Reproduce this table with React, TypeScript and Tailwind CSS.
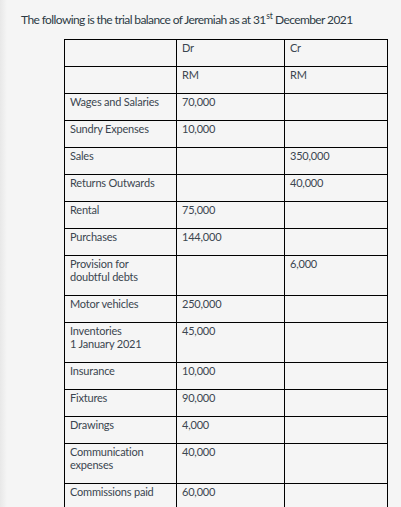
const rows: [string[], string, string][] = [
  [["Wages and Salaries"], "70,000", ""],
  [["Sundry Expenses"], "10,000", ""],
  [["Sales"], "", "350,000"],
  [["Returns Outwards"], "", "40,000"],
  [["Rental"], "75,000", ""],
  [["Purchases"], "144,000", ""],
  [["Provision for", "doubtful debts"], "", "6,000"],
  [["Motor vehicles"], "250,000", ""],
  [["Inventories", "1 January 2021"], "45,000", ""],
  [["Insurance"], "10,000", ""],
  [["Fixtures"], "90,000", ""],
  [["Drawings"], "4,000", ""],
  [["Communication", "expenses"], "40,000", ""],
  [["Commissions paid"], "60,000", ""],
];

function Cell({ lines }: { lines: string[] }) {
  return (
    <td className="border border-black px-[5px] pt-[1px] pb-[12px] align-top">
      {lines.map((l, i) => (
        <div key={i}>{l || "\u00a0"}</div>
      ))}
    </td>
  );
}

export default function App() {
  return (
    <div
      className="h-[507px] overflow-hidden bg-[#f5f5f5] text-[#2d3b45] relative"
      style={{ fontFamily: "Lato, 'Noto Sans', sans-serif" }}
    >
      {/* left shadow edge */}
      <div className="absolute left-0 top-0 bottom-0 w-[7px] bg-gradient-to-r from-[#e8e8e8] to-[#f5f5f5]" />
      <div className="pl-[21px] pt-[12px]">
        <p className="text-[12px] leading-[15px] tracking-[-0.6px]">
          The following is the trial balance of Jeremiah as at 31
          <sup className="text-[8.5px] tracking-[-0.2px] -top-[5px] ml-[0.5px]">st</sup> December 2021
        </p>
        <table className="ml-[43px] mt-[12px] border-collapse text-[11px] leading-[13px] text-[#3b4650] tracking-[-0.2px]">
          <colgroup>
            <col className="w-[112px]" />
            <col className="w-[108px]" />
            <col className="w-[103px]" />
          </colgroup>
          <tbody>
            <tr>
              <Cell lines={[""]} />
              <Cell lines={["Dr"]} />
              <Cell lines={["Cr"]} />
            </tr>
            <tr>
              <Cell lines={[""]} />
              <Cell lines={["RM"]} />
              <Cell lines={["RM"]} />
            </tr>
            {rows.map(([label, dr, cr], i) => (
              <tr key={i}>
                <Cell lines={label} />
                <Cell lines={[dr]} />
                <Cell lines={[cr]} />
              </tr>
            ))}
          </tbody>
        </table>
      </div>
    </div>
  );
}
